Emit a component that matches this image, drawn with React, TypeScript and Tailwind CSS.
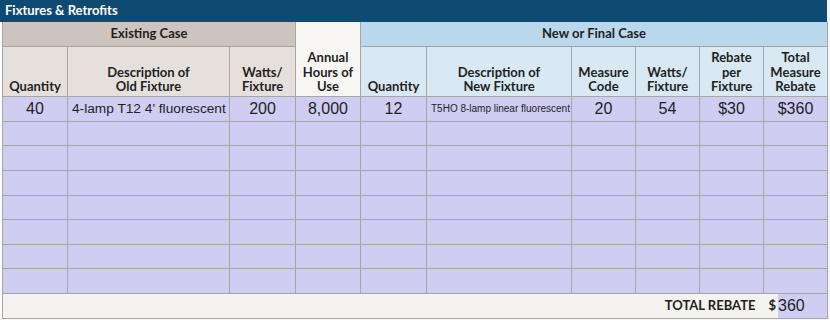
import React from "react";

const B = "border border-[#a8a6a4]";

export default function App() {
  const widths = [65, 162, 66, 65, 66, 145, 64, 64, 64, 64];
  const rowH = [25, 24, 25, 25, 24, 25, 24, 25];
  const first = ["40", "4-lamp T12 4' fluorescent", "200", "8,000", "12", "T5HO 8-lamp linear fluorescent", "20", "54", "$30", "$360"];
  const hd = `${B} align-bottom text-center leading-[14.5px] pb-[2px] px-0`;
  return (
    <div className="w-[830px] h-[320px] bg-[#f7f6f4] overflow-hidden" style={{ fontFamily: "Lato, 'Noto Sans', sans-serif" }}>
      <div className="w-[827px] bg-white">
        <div className="h-[22px] bg-[#0e4a72] text-white font-bold text-[13px] pl-[5px] flex items-center">
          Fixtures &amp; Retrofits
        </div>
        <div className="pl-[2px]">
          <table className="table-fixed border-collapse w-[825px] text-[#1f1f1f]">
            <colgroup>
              {widths.map((w, i) => (
                <col key={i} style={{ width: w }} />
              ))}
            </colgroup>
            <thead>
              <tr className="h-[24px] font-bold text-[13px]">
                <th colSpan={3} className={`${B} border-t-0 bg-[#ccc4bd] text-center font-bold`}>Existing Case</th>
                <th rowSpan={2} className={`${hd} border-t-0 bg-[#f8f6f3] font-bold`}>
                  Annual<br />Hours of<br />Use
                </th>
                <th colSpan={6} className={`${B} border-t-0 bg-[#b9d8eb] text-center font-bold`}>New or Final Case</th>
              </tr>
              <tr className="h-[50px] font-bold text-[13px]">
                <th className={`${hd} bg-[#e6e0dc] font-bold`}>Quantity</th>
                <th className={`${hd} bg-[#e6e0dc] font-bold`}>Description of<br />Old Fixture</th>
                <th className={`${hd} bg-[#e6e0dc] font-bold`}>Watts/<br />Fixture</th>
                <th className={`${hd} bg-[#d8e9f3] font-bold`}>Quantity</th>
                <th className={`${hd} bg-[#d8e9f3] font-bold`}>Description of<br />New Fixture</th>
                <th className={`${hd} bg-[#d8e9f3] font-bold`}>Measure<br />Code</th>
                <th className={`${hd} bg-[#d8e9f3] font-bold`}>Watts/<br />Fixture</th>
                <th className={`${hd} bg-[#d8e9f3] font-bold`}>Rebate<br />per<br />Fixture</th>
                <th className={`${hd} bg-[#d8e9f3] font-bold`}>Total<br />Measure<br />Rebate</th>
              </tr>
            </thead>
            <tbody style={{ fontFamily: "'Liberation Sans', Arial, sans-serif" }}>
              {rowH.map((h, r) => (
                <tr key={r} style={{ height: h }} className="bg-[#cfcdf1]">
                  {widths.map((_, c) => {
                    const t = r === 0 ? first[c] : "";
                    const cls =
                      c === 1
                        ? "text-[13.7px] text-left pl-[4px] whitespace-nowrap"
                        : c === 5
                        ? "text-[10px] text-left pl-[4px] whitespace-nowrap"
                        : "text-[16px] text-center";
                    return (
                      <td key={c} className={`${B} p-0 leading-none ${cls}`}>
                        {t}
                      </td>
                    );
                  })}
                </tr>
              ))}
              <tr className="h-[24px] bg-[#f5f3f0]">
                <td colSpan={9} className={`${B} border-r-0 text-right pr-[8px] font-bold text-[13px]`} style={{ fontFamily: "Lato, sans-serif" }}>
                  TOTAL REBATE
                </td>
                <td className={`${B} border-l-0 p-0`}>
                  <div className="flex h-[24px] items-center">
                    <span className="font-bold text-[13px] pl-[5px] pr-[2px]" style={{ fontFamily: "Lato, sans-serif" }}>$</span>
                    <span className="flex-1 h-full bg-[#cfcdf1] flex items-center text-[16px] leading-none">360</span>
                  </div>
                </td>
              </tr>
            </tbody>
          </table>
        </div>
      </div>
    </div>
  );
}
